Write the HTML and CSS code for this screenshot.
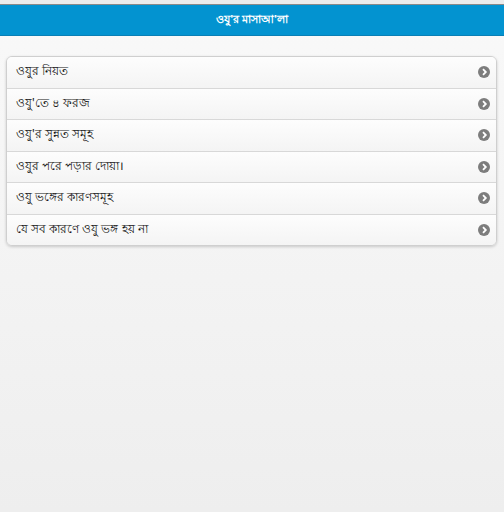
FILE: index.html
```html
<!DOCTYPE html>
<html lang="bn">
<head>
<meta charset="utf-8">
<title>ওযু'র মাসাআ'লা</title>
<link rel="stylesheet" href="styles.css">
</head>
<body>
<div class="topstrip"></div>
<header class="bar">ওযু'র মাসাআ'লা</header>
<main class="content">
  <ul class="list">
    <li class="item"><span class="label">ওযুর নিয়ত</span><span class="arrow"><svg viewBox="0 0 12 12" width="12" height="12"><circle cx="6" cy="6" r="6" fill="#7d7d7d"/><path d="M5 3.2 L7.8 6 L5 8.8" fill="none" stroke="#fff" stroke-width="1.8"/></svg></span></li>
    <li class="item"><span class="label">ওযু'তে ৪ ফরজ</span><span class="arrow"><svg viewBox="0 0 12 12" width="12" height="12"><circle cx="6" cy="6" r="6" fill="#7d7d7d"/><path d="M5 3.2 L7.8 6 L5 8.8" fill="none" stroke="#fff" stroke-width="1.8"/></svg></span></li>
    <li class="item"><span class="label">ওযু'র সুন্নত সমূহ</span><span class="arrow"><svg viewBox="0 0 12 12" width="12" height="12"><circle cx="6" cy="6" r="6" fill="#7d7d7d"/><path d="M5 3.2 L7.8 6 L5 8.8" fill="none" stroke="#fff" stroke-width="1.8"/></svg></span></li>
    <li class="item"><span class="label">ওযুর পরে পড়ার দোয়া।</span><span class="arrow"><svg viewBox="0 0 12 12" width="12" height="12"><circle cx="6" cy="6" r="6" fill="#7d7d7d"/><path d="M5 3.2 L7.8 6 L5 8.8" fill="none" stroke="#fff" stroke-width="1.8"/></svg></span></li>
    <li class="item"><span class="label">ওযু ভঙ্গের কারণসমূহ</span><span class="arrow"><svg viewBox="0 0 12 12" width="12" height="12"><circle cx="6" cy="6" r="6" fill="#7d7d7d"/><path d="M5 3.2 L7.8 6 L5 8.8" fill="none" stroke="#fff" stroke-width="1.8"/></svg></span></li>
    <li class="item"><span class="label">যে সব কারণে ওযু ভঙ্গ হয় না</span><span class="arrow"><svg viewBox="0 0 12 12" width="12" height="12"><circle cx="6" cy="6" r="6" fill="#7d7d7d"/><path d="M5 3.2 L7.8 6 L5 8.8" fill="none" stroke="#fff" stroke-width="1.8"/></svg></span></li>
  </ul>
</main>
</body>
</html>
```
FILE: styles.css
```css
html, body {
  margin: 0;
  padding: 0;
  height: 100%;
}
body {
  background: linear-gradient(#f9f9f9, #eeeeee);
  font-family: "Noto Sans", "Liberation Sans", sans-serif;
  color: #111;
}
.topstrip {
  height: 4px;
  background: #ececec;
  border-bottom: 1px solid #8a8a8a;
}
.bar {
  height: 30px;
  background: #0393d0;
  color: #fff;
  font-weight: bold;
  font-size: 11px;
  display: flex;
  align-items: center;
  justify-content: center;
  border-bottom: 1px solid #0a7fb5;
}
.content {
  padding: 20px 7px 0 6px;
}
.list {
  list-style: none;
  margin: 0;
  padding: 0;
  border: 1px solid #cfcfcf;
  border-radius: 6px;
  box-shadow: 0 1px 3px rgba(0,0,0,0.18);
  overflow: hidden;
}
.item {
  height: 30.5px;
  display: flex;
  align-items: center;
  justify-content: space-between;
  padding: 0 6px 0 9px;
  background: linear-gradient(#fdfdfd, #f4f4f4);
  border-top: 1px solid #d8d8d8;
  font-size: 12px;
}
.item:first-child {
  border-top: none;
}
.arrow {
  display: flex;
}
```
